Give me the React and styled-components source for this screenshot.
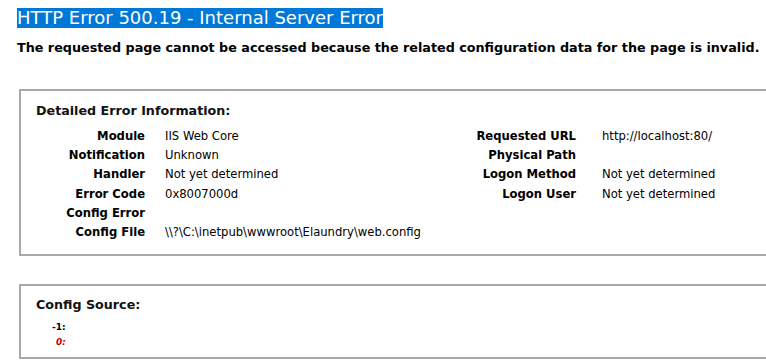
import React from "react";
import styled, { createGlobalStyle } from "styled-components";

const GlobalStyle = createGlobalStyle`
    html, body {
        margin: 0;
        padding: 0;
        background: #fff;
        overflow: hidden;
    }
    body {
        font-family: "DejaVu Sans", Verdana, sans-serif;
        font-size: 11.6px;
        color: #000;
    }
`;

const Page = styled.div`
    width: 900px;
    padding: 8px 0 0 17px;
`;

const Title = styled.h1`
    margin: 0;
    font-size: 18px;
    font-weight: normal;
    line-height: 20px;
    height: 20px;
`;

const Selected = styled.span`
    background: #0078d7;
    color: #fff;
    display: inline-block;
    height: 20px;
`;

const Subtitle = styled.h2`
    margin: 12px 0 0 0;
    font-size: 12.75px;
    font-weight: bold;
    line-height: 15px;
`;

const Box = styled.div`
    margin: ${(p) => p.top}px 0 0 2px;
    border: 2px solid #a9a9a9;
    border-right: none;
    padding: ${(p) => p.pad};
`;

const Legend = styled.div`
    font-weight: bold;
    font-size: 12.7px;
    line-height: 15px;
    color: #111;
`;

const Details = styled.div`
    display: flex;
    margin-top: 9px;
`;

const Table = styled.div`
    display: grid;
    grid-template-columns: ${(p) => p.label}px auto;
    column-gap: ${(p) => p.gap}px;
    width: ${(p) => p.width}px;
    align-content: start;
`;

const Th = styled.div`
    font-weight: bold;
    text-align: right;
    padding: 3px 0;
    line-height: 13.2px;
    height: 13.2px;
`;

const Td = styled.div`
    padding: 3px 0;
    line-height: 13.2px;
    height: 13.2px;
    white-space: nowrap;
`;

const Code = styled.div`
    margin: 8px 0 0 16px;
    font-size: 9px;
    font-weight: bold;
    line-height: 15px;
`;

const CodeLine = styled.div`
    color: ${(p) => (p.hl ? "#cc0000" : "#000")};
    font-style: ${(p) => (p.hl ? "italic" : "normal")};
    padding-left: ${(p) => (p.hl ? 4 : 0)}px;
`;

const left = [
    ["Module", "IIS Web Core"],
    ["Notification", "Unknown"],
    ["Handler", "Not yet determined"],
    ["Error Code", "0x8007000d"],
    ["Config Error", ""],
    ["Config File", "\\\\?\\C:\\inetpub\\wwwroot\\Elaundry\\web.config"],
];

const right = [
    ["Requested URL", "http://localhost:80/"],
    ["Physical Path", ""],
    ["Logon Method", "Not yet determined"],
    ["Logon User", "Not yet determined"],
];

const Rows = ({ rows }) =>
    rows.map(([k, v]) => (
        <React.Fragment key={k}>
            <Th>{k}</Th>
            <Td>{v}</Td>
        </React.Fragment>
    ));

export default function App() {
    return (
        <>
            <GlobalStyle />
            <Page>
                <Title>
                    <Selected>HTTP Error 500.19 - Internal Server Error</Selected>
                </Title>
                <Subtitle>
                    The requested page cannot be accessed because the related configuration data for the page is invalid.
                </Subtitle>
                <Box top={34} pad="12px 0 12px 15px">
                    <Legend>Detailed Error Information:</Legend>
                    <Details>
                        <Table label={109} gap={20} width={393}>
                            <Rows rows={left} />
                        </Table>
                        <Table label={147} gap={26} width={340}>
                            <Rows rows={right} />
                        </Table>
                    </Details>
                </Box>
                <Box top={28} pad="11px 0 7px 15px">
                    <Legend>Config Source:</Legend>
                    <Code>
                        <CodeLine>-1:</CodeLine>
                        <CodeLine hl>0:</CodeLine>
                    </Code>
                </Box>
            </Page>
        </>
    );
}
